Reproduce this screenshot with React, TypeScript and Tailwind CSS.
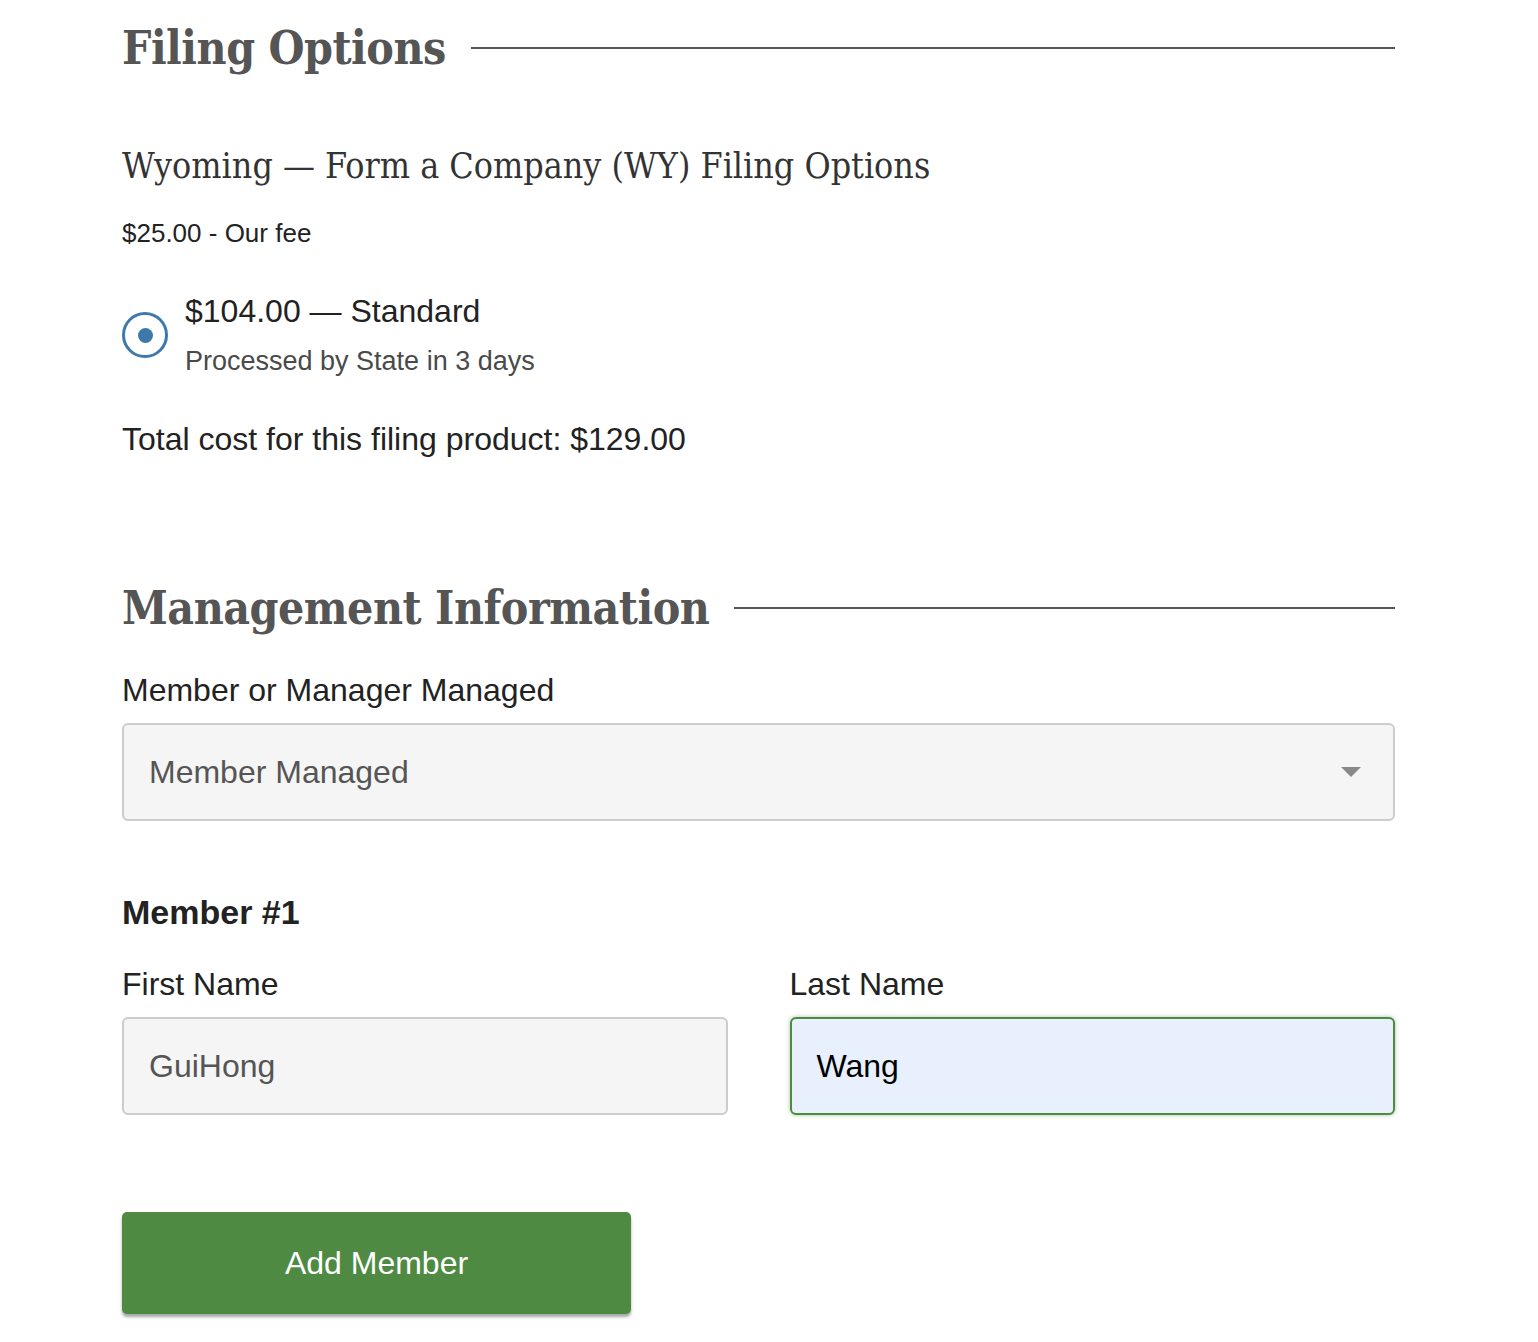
export default function App() {
  return (
    <div className="min-h-screen bg-white font-['Liberation_Sans',Arial,sans-serif] text-[#222]">
      <div className="mx-[122px] w-[1273px] pt-[18px] pb-8">
        {/* filing options */}
        <div className="flex items-center gap-[25px]">
          <h2 className="font-['DejaVu_Serif_Condensed','DejaVu_Serif',serif] text-[46px] leading-[60px] font-semibold text-[#555] tracking-[-0.5px]">
            Filing Options
          </h2>
          <div className="h-[2px] flex-1 bg-[#555]" />
        </div>

        <h3 className="mt-[68px] font-['DejaVu_Serif_Condensed','DejaVu_Serif',serif] text-[35.5px] leading-[40px] text-[#333]">
          Wyoming — Form a Company (WY) Filing Options
        </h3>
        <p className="mt-[32px] text-[26px] leading-[30px]">$25.00 - Our fee</p>

        <label className="mt-[45px] flex items-center gap-[17px]">
          <span className="flex h-[46px] w-[46px] items-center justify-center rounded-full border-[3px] border-[#3d7aab]">
            <span className="h-[15px] w-[15px] rounded-full bg-[#3d7aab]" />
          </span>
          <span>
            <span className="block text-[32px] leading-[36px]">$104.00 — Standard</span>
            <span className="mt-[16px] block text-[27px] leading-[32px] text-[#4a4a4a]">
              Processed by State in 3 days
            </span>
          </span>
        </label>

        <p className="mt-[44px] text-[32px] leading-[36px]">
          Total cost for this filing product: $129.00
        </p>

        {/* management */}
        <div className="mt-[121px] flex items-center gap-[25px]">
          <h2 className="font-['DejaVu_Serif_Condensed','DejaVu_Serif',serif] text-[46px] leading-[60px] font-semibold text-[#555] tracking-[-0.5px]">
            Management Information
          </h2>
          <div className="h-[2px] flex-1 bg-[#555]" />
        </div>

        <label className="mt-[34px] block text-[32px] leading-[36px]">
          Member or Manager Managed
        </label>
        <div className="mt-[15px] flex h-[98px] items-center justify-between rounded-[6px] border-2 border-[#ccc] bg-[#f5f5f5] pl-[25px] pr-[32px]">
          <span className="text-[32px] text-[#555]">Member Managed</span>
          <svg width="20" height="10" viewBox="0 0 20 10">
            <path d="M0 0 L20 0 L10 10 Z" fill="#888" />
          </svg>
        </div>

        <h4 className="mt-[72px] text-[34px] leading-[38px] font-bold">Member #1</h4>

        <div className="mt-[35px] grid grid-cols-2 gap-[62px]">
          <div>
            <div className="text-[32px] leading-[36px]">First Name</div>
            <div className="mt-[15px] flex h-[98px] items-center rounded-[6px] border-2 border-[#ccc] bg-[#f5f5f5] px-[25px] text-[32px] text-[#555]">
              GuiHong
            </div>
          </div>
          <div>
            <div className="text-[32px] leading-[36px]">Last Name</div>
            <div className="mt-[15px] flex h-[98px] items-center rounded-[6px] border-2 border-[#4e8a3f] bg-[#e8f0fe] px-[25px] text-[32px] text-black shadow-[0_0_4px_rgba(78,138,63,0.5)]">
              Wang
            </div>
          </div>
        </div>

        <button className="mt-[97px] flex h-[102px] w-[509px] items-center justify-center rounded-[5px] bg-[#4e8a42] text-[32px] text-white shadow-[0_3px_3px_rgba(0,0,0,0.35)]">
          Add Member
        </button>
      </div>
    </div>
  );
}
